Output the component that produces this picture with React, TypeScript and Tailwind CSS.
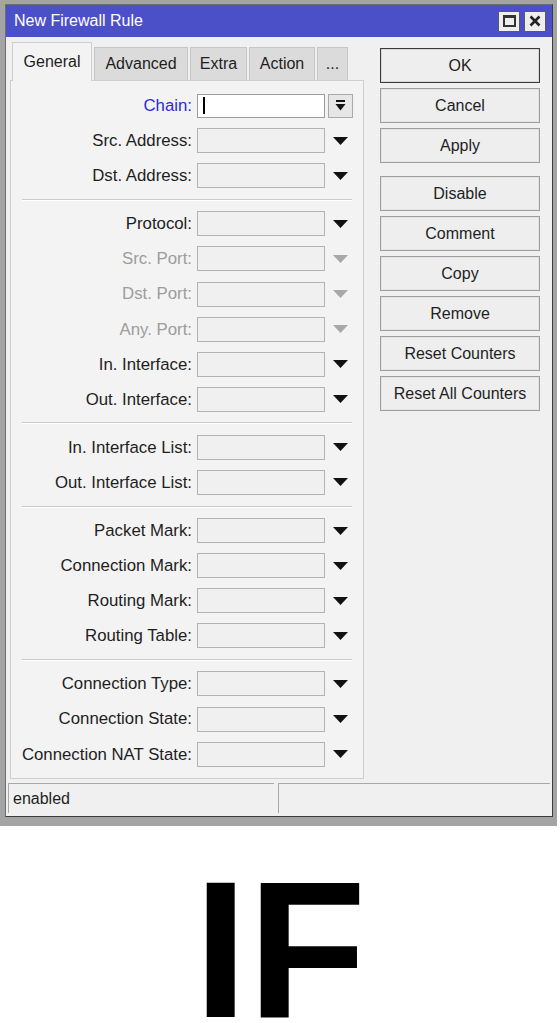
import React from 'react';

type Field = { label: string; kind?: 'chain' | 'disabled' };
type Item = Field | 'sep';

const items: Item[] = [
  { label: 'Chain:', kind: 'chain' },
  { label: 'Src. Address:' },
  { label: 'Dst. Address:' },
  'sep',
  { label: 'Protocol:' },
  { label: 'Src. Port:', kind: 'disabled' },
  { label: 'Dst. Port:', kind: 'disabled' },
  { label: 'Any. Port:', kind: 'disabled' },
  { label: 'In. Interface:' },
  { label: 'Out. Interface:' },
  'sep',
  { label: 'In. Interface List:' },
  { label: 'Out. Interface List:' },
  'sep',
  { label: 'Packet Mark:' },
  { label: 'Connection Mark:' },
  { label: 'Routing Mark:' },
  { label: 'Routing Table:' },
  'sep',
  { label: 'Connection Type:' },
  { label: 'Connection State:' },
  { label: 'Connection NAT State:' },
];

const tabs = [
  { name: 'General', w: 'w-[80px]' },
  { name: 'Advanced', w: 'w-[94px]' },
  { name: 'Extra', w: 'w-[57px]' },
  { name: 'Action', w: 'w-[66px]' },
  { name: '...', w: 'w-[31px]' },
];

const DownArrow = ({ muted }: { muted?: boolean }) => (
  <svg width="15" height="8" viewBox="0 0 15 8" className="ml-[8px]">
    <polygon points="0,0 15,0 7.5,8" fill={muted ? '#a8a8a8' : '#111'} />
  </svg>
);

const FieldRow = ({ f }: { f: Field }) => {
  const labelColor =
    f.kind === 'chain' ? 'text-[#2b2bd8]' : f.kind === 'disabled' ? 'text-[#9c9c9c]' : 'text-[#1e1e1e]';
  return (
    <div className="flex h-[35.1px] items-center">
      <span className={`w-[181px] whitespace-nowrap text-right text-[16.8px] ${labelColor}`}>{f.label}</span>
      {f.kind === 'chain' ? (
        <>
          <div className="ml-[5px] flex h-[24px] w-[128px] items-center border border-[#9c9c9c] bg-white pl-[5px]">
            <div className="h-[17px] w-[2px] bg-black" />
          </div>
          <button className="ml-[3px] flex h-[24px] w-[25px] items-center justify-center border border-[#a9a9a9] bg-[#e6e6e6]">
            {/* arrow down to a bar */}
            <svg width="11" height="11" viewBox="0 0 11 11">
              <rect x="1" y="0" width="9" height="2" fill="#111" />
              <polygon points="0.5,4 10.5,4 5.5,10.5" fill="#111" />
            </svg>
          </button>
        </>
      ) : (
        <>
          <div className="ml-[5px] h-[25px] w-[128px] border border-[#b3b3b3] bg-[#f0f0f0]" />
          <DownArrow muted={f.kind === 'disabled'} />
        </>
      )}
    </div>
  );
};

const Btn = ({ label, primary, className = '' }: { label: string; primary?: boolean; className?: string }) => (
  <button
    className={`flex h-[35px] w-[160px] items-center justify-center border bg-[#eeeeee] text-[16px] text-[#1e1e1e] ${
      primary ? 'border-[#3a3a3a] shadow-[inset_0_0_0_1px_#d8d8d8]' : 'border-[#9e9e9e] shadow-[inset_0_0_0_1px_#e4e4e4]'
    } ${className}`}
  >
    {label}
  </button>
);

export default function App() {
  return (
    <div className="min-h-[1023px] overflow-hidden bg-white" style={{ fontFamily: '"Liberation Sans", Arial, sans-serif' }}>
      {/* window frame */}
      <div className="h-[826px] w-[557px] bg-[#a4a4a4] pb-[9px] pl-[5px] pr-[4px] pt-[4px]">
        <div className="flex h-full flex-col border border-b-[#3c3c3c] border-l-[#6e6e6e] border-r-[#3c3c3c] border-t-[#6e6e6e] bg-[#f0f0f0]">
          {/* title bar */}
          <div className="flex h-[32px] items-center bg-[#4c50c8] pl-[8px] pr-[6px]">
            <span className="flex-1 text-[16px] text-white">New Firewall Rule</span>
            <div className="flex gap-[4px]">
              <div className="flex h-[21px] w-[22px] items-center justify-center border border-[#5a5a5a] bg-[#eeeeee]">
                <div className="h-[12px] w-[13px] border-[2px] border-t-[3px] border-[#333]" />
              </div>
              <div className="flex h-[21px] w-[22px] items-center justify-center border border-[#5a5a5a] bg-[#eeeeee]">
                <svg width="12" height="12" viewBox="0 0 12 12">
                  <path d="M1.5 1.5 L10.5 10.5 M10.5 1.5 L1.5 10.5" stroke="#222" strokeWidth="2.6" />
                </svg>
              </div>
            </div>
          </div>

          {/* body */}
          <div className="flex flex-1">
            <div className="pl-[4px] pt-[5px]">
              <div className="flex items-end pl-[2px]">
                {tabs.map((t, i) =>
                  i === 0 ? (
                    <div
                      key={t.name}
                      className={`${t.w} relative z-10 -mb-px flex h-[39px] items-center justify-center border border-b-0 border-[#cfcfcf] bg-[#f3f3f3] text-[16px] text-[#1e1e1e]`}
                    >
                      {t.name}
                    </div>
                  ) : (
                    <div
                      key={t.name}
                      className={`${t.w} ml-[2px] flex h-[33px] items-center justify-center border border-b-0 border-[#c6c6c6] bg-[#dbdbdb] text-[16px] text-[#1e1e1e]`}
                    >
                      {t.name}
                    </div>
                  )
                )}
              </div>
              <div className="h-[699px] w-[354px] border border-[#cfcfcf] bg-[#f3f3f3] pt-[7px]">
                {items.map((it, i) =>
                  it === 'sep' ? (
                    <div key={i} className="mx-[11px] my-[5.5px] h-[2px] border-t border-b border-t-[#cacaca] border-b-white" />
                  ) : (
                    <FieldRow key={i} f={it} />
                  )
                )}
              </div>
            </div>

            {/* action buttons */}
            <div className="ml-[16px] flex flex-col gap-[5px] pt-[11px]">
              <Btn label="OK" primary />
              <Btn label="Cancel" />
              <Btn label="Apply" />
              <Btn label="Disable" className="mt-[8px]" />
              <Btn label="Comment" />
              <Btn label="Copy" />
              <Btn label="Remove" />
              <Btn label="Reset Counters" />
              <Btn label="Reset All Counters" />
            </div>
          </div>

          {/* status bar */}
          <div className="flex h-[36px] gap-[4px] px-[2px] pb-[3px] pt-[3px]">
            <div className="flex w-[266px] items-center border-l border-t border-l-[#a8a8a8] border-t-[#a8a8a8] pl-[4px] text-[16px] text-[#1e1e1e]">
              enabled
            </div>
            <div className="flex-1 border-l border-t border-l-[#a8a8a8] border-t-[#a8a8a8]" />
          </div>
        </div>
      </div>

      <div className="pt-[27px] text-center text-[194px] font-bold leading-none text-black">IF</div>
    </div>
  );
}
